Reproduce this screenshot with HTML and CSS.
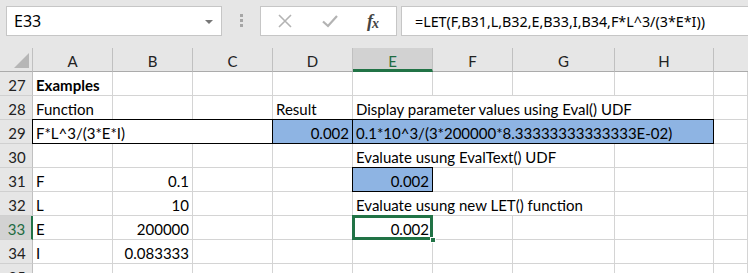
FILE: index.html
```html
<!DOCTYPE html>
<html>
<head>
<meta charset="utf-8">
<link rel="stylesheet" href="styles.css">
</head>
<body>
<div class="app">
  <div class="toolbar">
    <div class="namebox"><span class="nb-text">E33</span><span class="nb-arrow"></span></div>
    <div class="grip"><i></i><i></i><i></i></div>
    <div class="fbuttons">
      <svg class="btn-x" width="16" height="16" viewBox="0 0 16 16"><path d="M2 2 L14 14 M14 2 L2 14" stroke="#b3b3b3" stroke-width="1.6" fill="none"/></svg>
      <svg class="btn-ok" width="18" height="16" viewBox="0 0 18 16"><path d="M2 8.5 L7 13 L16 3" stroke="#b3b3b3" stroke-width="2.2" fill="none"/></svg>
      <span class="fx">f<sub>x</sub></span>
    </div>
    <div class="formula">=LET(F,B31,L,B32,E,B33,I,B34,F*L^3/(3*E*I))</div>
  </div>
  <div class="sheet">
    <div class="corner"><span class="tri"></span></div>
    <div class="ch">A</div><div class="ch">B</div><div class="ch">C</div><div class="ch">D</div>
    <div class="ch sel">E</div><div class="ch">F</div><div class="ch">G</div><div class="ch">H</div><div class="ch last"></div>

    <div class="rh">27</div>
    <div class="c b">Examples</div><div class="c"></div><div class="c"></div><div class="c"></div><div class="c"></div><div class="c"></div><div class="c"></div><div class="c"></div><div class="c"></div>

    <div class="rh">28</div>
    <div class="c">Function</div><div class="c"></div><div class="c"></div><div class="c">Result</div><div class="c s4">Display parameter values using Eval() UDF</div><div class="c"></div>

    <div class="rh">29</div>
    <div class="c s3 box">F*L^3/(3*E*I)</div><div class="c r blue box">0.002</div><div class="c s4 blue box">0.1*10^3/(3*200000*8.33333333333333E-02)</div><div class="c"></div>

    <div class="rh">30</div>
    <div class="c"></div><div class="c"></div><div class="c"></div><div class="c"></div><div class="c s3">Evaluate usung EvalText() UDF</div><div class="c"></div><div class="c"></div>

    <div class="rh">31</div>
    <div class="c">F</div><div class="c r">0.1</div><div class="c"></div><div class="c"></div><div class="c r blue box">0.002</div><div class="c"></div><div class="c"></div><div class="c"></div><div class="c"></div>

    <div class="rh">32</div>
    <div class="c">L</div><div class="c r">10</div><div class="c"></div><div class="c"></div><div class="c s3">Evaluate usung new LET() function</div><div class="c"></div><div class="c"></div>

    <div class="rh selrow">33</div>
    <div class="c">E</div><div class="c r">200000</div><div class="c"></div><div class="c"></div><div class="c r active">0.002</div><div class="c"></div><div class="c"></div><div class="c"></div><div class="c"></div>

    <div class="rh">34</div>
    <div class="c">I</div><div class="c r">0.083333</div><div class="c"></div><div class="c"></div><div class="c"></div><div class="c"></div><div class="c"></div><div class="c"></div><div class="c"></div>

    <div class="rh">35</div>
    <div class="c"></div><div class="c"></div><div class="c"></div><div class="c"></div><div class="c"></div><div class="c"></div><div class="c"></div><div class="c"></div><div class="c"></div>
  </div>
</div>
</body>
</html>
```
FILE: styles.css
```css
html, body {
  margin: 0;
  padding: 0;
  background: #ffffff;
  overflow: hidden;
}
.app {
  width: 748px;
  height: 273px;
  overflow: hidden;
  font-family: Lato, "Liberation Sans", sans-serif;
  font-size: 15px;
  color: #000;
}
.toolbar {
  height: 48px;
  box-sizing: border-box;
  background: #e6e6e6;
  padding: 6px 0 0 6px;
  display: flex;
  align-items: flex-start;
}
.namebox {
  width: 216px;
  height: 30px;
  box-sizing: border-box;
  background: #fff;
  border: 1px solid #c6c6c6;
  display: flex;
  align-items: center;
  justify-content: space-between;
  padding: 0 8px 0 7px;
  font-family: "Noto Sans", "Open Sans", sans-serif;
  font-size: 16px;
}
.nb-arrow {
  width: 0;
  height: 0;
  border-left: 4px solid transparent;
  border-right: 4px solid transparent;
  border-top: 4px solid #777;
  margin-top: 2px;
}
.grip {
  width: 38px;
  display: flex;
  flex-direction: column;
  align-items: center;
  gap: 2px;
  padding-top: 8px;
}
.grip i {
  display: block;
  width: 3px;
  height: 3px;
  background: #a6a6a6;
}
.fbuttons {
  width: 137px;
  height: 30px;
  box-sizing: border-box;
  background: #fff;
  border: 1px solid #c6c6c6;
  display: flex;
  align-items: center;
  padding-left: 16px;
}
.btn-x { margin-right: 28px; }
.btn-ok { margin-right: 26px; }
.fx {
  font-family: "Liberation Serif", serif;
  font-style: italic;
  font-size: 18px;
  color: #444;
  font-weight: bold;
  letter-spacing: -1px;
  margin-left: 2px;
}
.fx sub {
  font-size: 14px;
  vertical-align: -1px;
}
.formula {
  flex: 1;
  height: 30px;
  box-sizing: border-box;
  margin-left: 4px;
  background: #fff;
  border: 1px solid #c6c6c6;
  border-right: none;
  padding-left: 13px;
  display: flex;
  align-items: center;
  font-family: "Noto Sans", "Open Sans", sans-serif;
  font-size: 14.3px;
  white-space: nowrap;
  overflow: hidden;
}
.sheet {
  display: grid;
  grid-template-columns: 33px 80px 80px 80px 80px 80px 80px 102px 99px 34px;
  grid-template-rows: 24px repeat(9, 24px);
}
.sheet > div {
  box-sizing: border-box;
  border-right: 1px solid #d4d4d4;
  border-bottom: 1px solid #d4d4d4;
  white-space: nowrap;
  overflow: hidden;
}
.corner {
  background: #e6e6e6;
  position: relative;
  border-right: 1px solid #c0c0c0 !important;
  border-bottom: 1px solid #ababab !important;
}
.tri {
  position: absolute;
  right: 3px;
  bottom: 3px;
  width: 0;
  height: 0;
  border-left: 15px solid transparent;
  border-bottom: 15px solid #b6b6b6;
}
.ch {
  background: #e6e6e6;
  border-right: 1px solid #c0c0c0 !important;
  border-bottom: 1px solid #ababab !important;
  display: flex;
  align-items: center;
  justify-content: center;
  padding-top: 2px;
  color: #222;
}
.ch.sel {
  background: #d2d2d2;
  border-bottom: 3px solid #217346 !important;
  color: #1e6b41;
  padding-top: 4px;
}
.ch.last { border-right: none !important; }
.rh {
  background: #e6e6e6;
  border-right: 1px solid #c0c0c0 !important;
  border-bottom: 1px solid #d0d0d0 !important;
  display: flex;
  align-items: center;
  justify-content: center;
  padding-left: 2px;
  padding-top: 2px;
  color: #222;
}
.rh.selrow {
  background: #d2d2d2;
  color: #1e6b41;
  border-right: 2px solid #217346 !important;
}
.c {
  padding: 2px 3px 0;
  line-height: 22px;
}
.c.b { font-weight: bold; }
.c.r { text-align: right; }
.s3 { grid-column: span 3; }
.s4 { grid-column: span 4; }
.blue { background: #8eb4e3; }
.box {
  border-right: 1px solid #000 !important;
  border-bottom: 1px solid #000 !important;
  box-shadow: -1px 0 0 #000, 0 -1px 0 #000, -1px -1px 0 #000;
}
.active {
  position: relative;
  overflow: visible !important;
  box-shadow: inset 0 0 0 2px #217346, -1px 0 0 #217346, 0 -1px 0 #217346, -1px -1px 0 #217346;
  border-right-color: #217346 !important;
  border-bottom-color: #217346 !important;
}
.active::after {
  content: "";
  position: absolute;
  right: -4px;
  bottom: -4px;
  width: 6px;
  height: 6px;
  background: #217346;
  border: 1px solid #fff;
  box-sizing: border-box;
}
```
